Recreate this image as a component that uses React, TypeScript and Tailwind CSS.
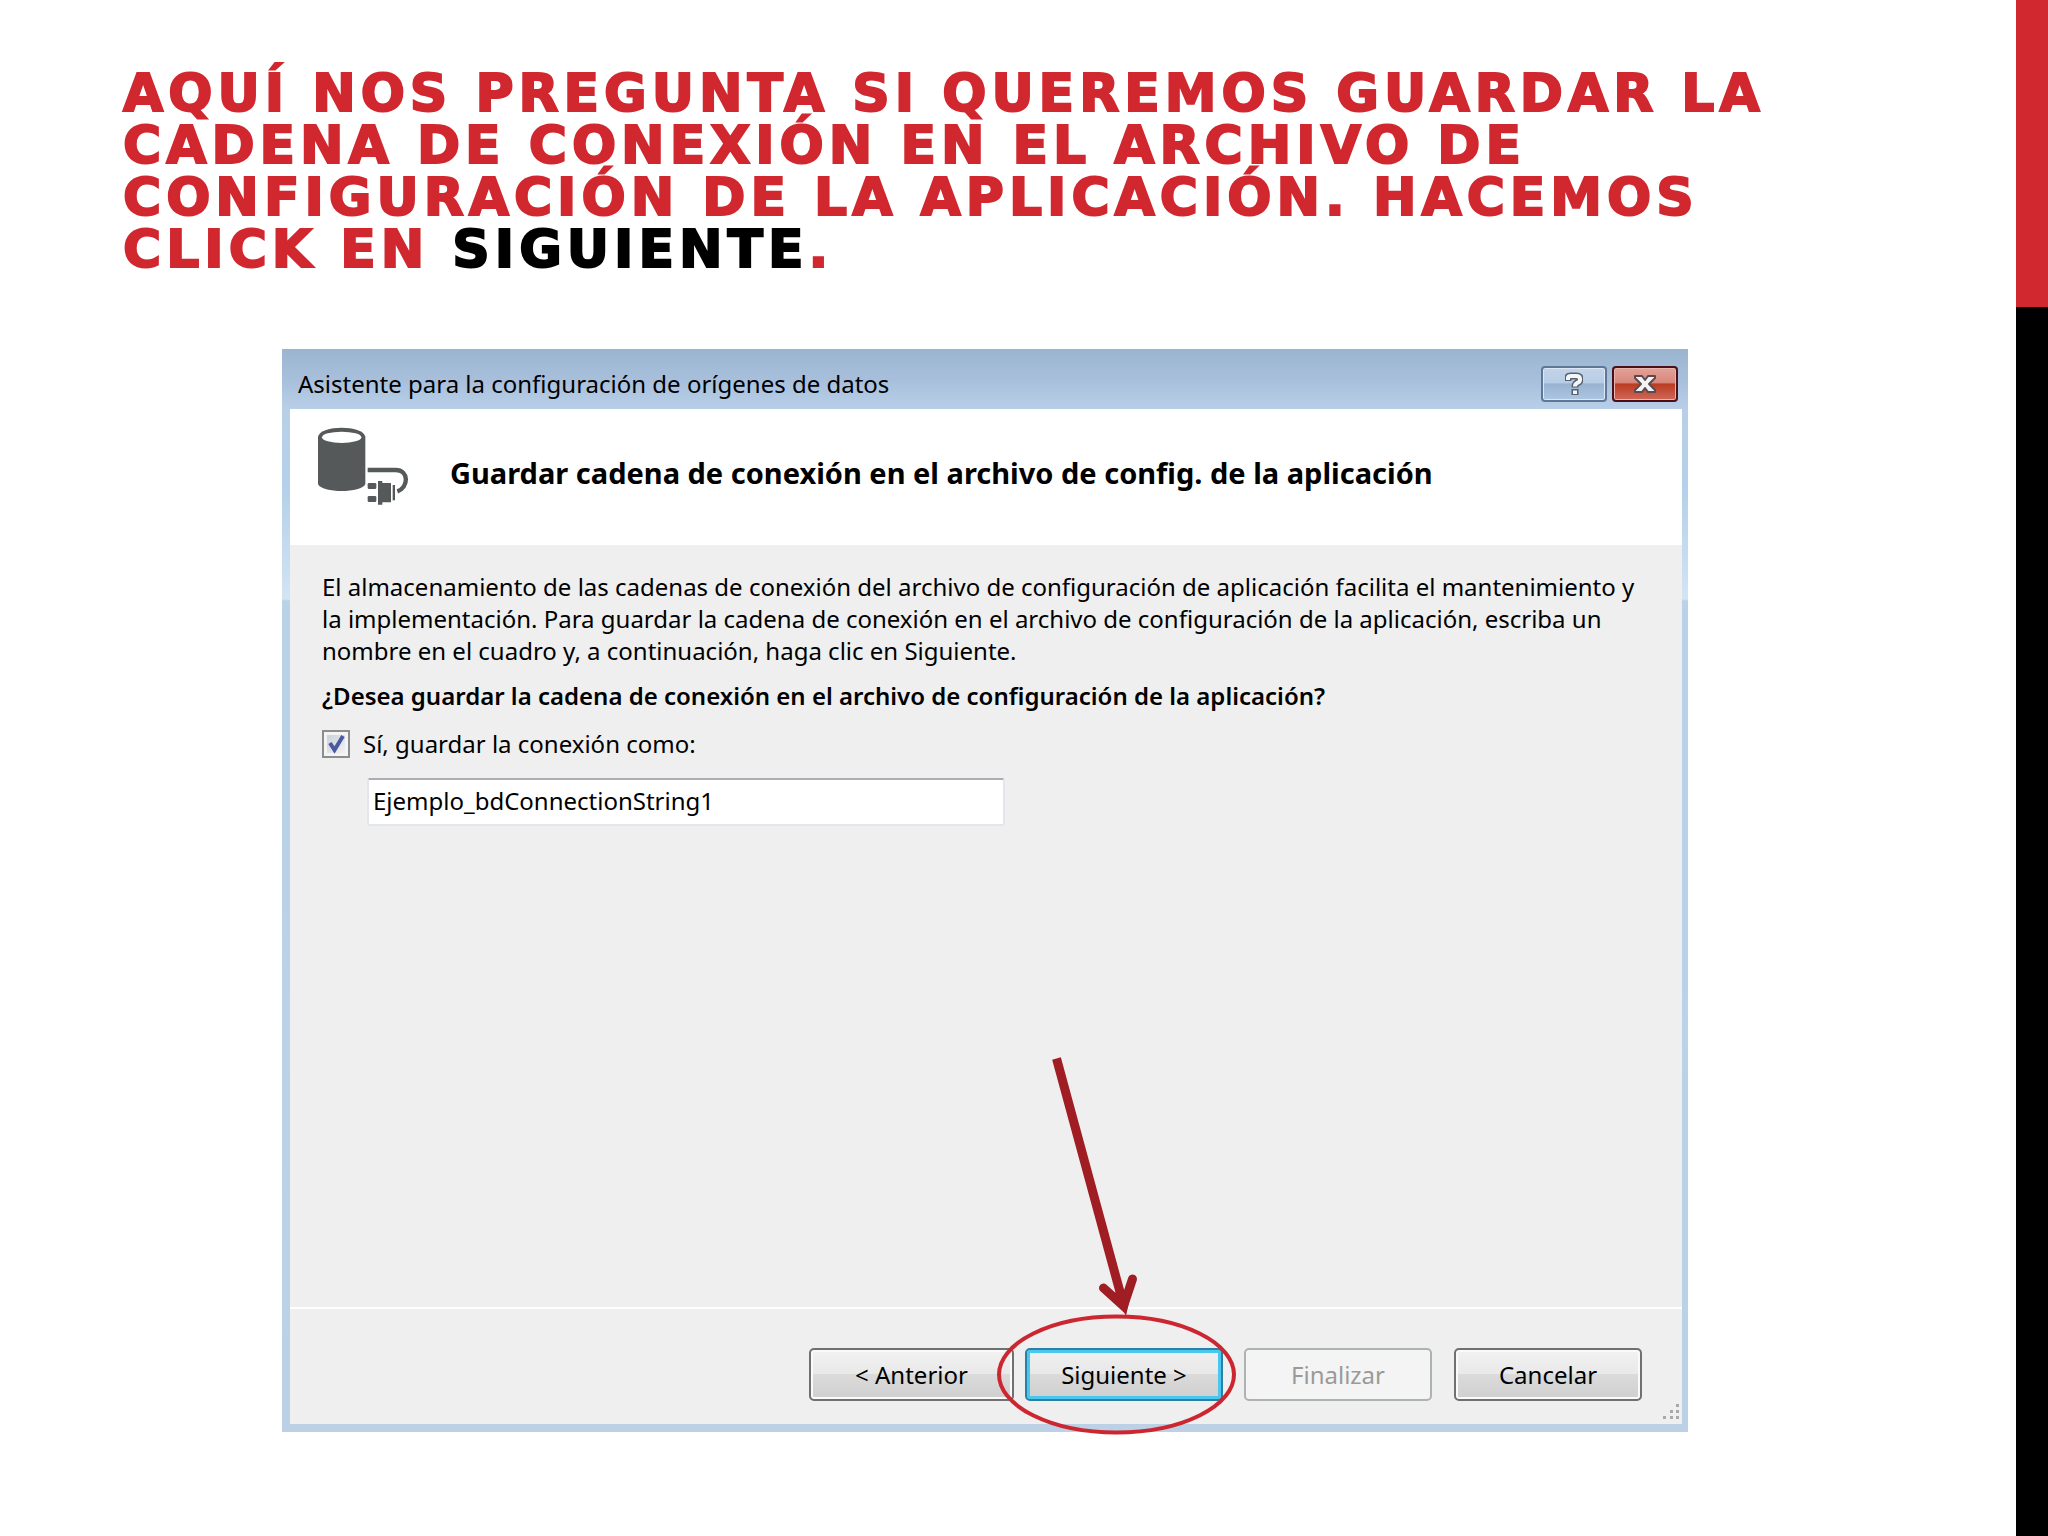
import { useState } from "react";
import type { ReactNode } from "react";
import clsx from "clsx";

function DatabasePlugIcon() {
  return (
    <svg
      viewBox="50 48 279 240"
      className="h-20 w-[93px] shrink-0"
      fill="#56595a"
      aria-hidden="true"
    >
      <path d="M53 80C60 44 188 44 195 80V222C185 250 63 250 53 222Z" />
      <ellipse cx="124" cy="82" rx="59" ry="17" fill="#fff" />
      <path
        d="M202 180H286C326 180 326 232 291 244"
        fill="none"
        stroke="#56595a"
        strokeWidth="13"
      />
      <rect x="202" y="219" width="26" height="18" rx="4" />
      <rect x="202" y="258" width="26" height="18" rx="4" />
      <path d="M233 213H246V219H272V277H246V284H233Z" />
      <rect x="277" y="225" width="7" height="46" />
    </svg>
  );
}

function CaptionButton({
  label,
  danger,
  children,
}: {
  label: string;
  danger?: boolean;
  children: ReactNode;
}) {
  return (
    <button
      type="button"
      aria-label={label}
      className={clsx(
        "flex h-9 w-[66px] items-center justify-center rounded-[4px] border-2",
        danger
          ? "border-[#4a0f18] bg-[linear-gradient(#e3a198_0%,#d9877c_46%,#bb3b22_50%,#d0685a_100%)] shadow-[inset_0_0_0_1px_#eab5ad]"
          : "border-[#5f7897] bg-[linear-gradient(#c3d4ea_0%,#b7cce5_46%,#98b2d1_50%,#adc6e2_100%)] shadow-[inset_0_0_0_1px_#dce8f5]"
      )}
    >
      {children}
    </button>
  );
}

function WizardButton({
  className,
  disabled,
  focused,
  children,
}: {
  className?: string;
  disabled?: boolean;
  focused?: boolean;
  children: ReactNode;
}) {
  return (
    <button
      type="button"
      disabled={disabled}
      className={clsx(
        "h-[53px] rounded-[5px] border-2 text-center text-[24px] leading-8",
        disabled && "border-[#adb2b5] bg-[#f4f4f4] text-[#9a9a9a]",
        focused &&
          "border-[#2c7fa5] bg-[linear-gradient(#f0f0f0_0%,#e8e8e8_48%,#dadada_50%,#cfcfcf_100%)] text-black shadow-[inset_0_0_0_3px_#48c8ee]",
        !disabled &&
          !focused &&
          "border-[#707070] bg-[linear-gradient(#f2f2f2_0%,#e9e9e9_48%,#dbdbdb_50%,#cfcfcf_100%)] text-black shadow-[inset_0_0_0_2px_#fafafa]",
        className
      )}
    >
      {children}
    </button>
  );
}

/* Circle and arrow drawn over the "next" button */
function Callout() {
  return (
    <svg
      viewBox="0 0 244 388"
      className="pointer-events-none absolute -top-[298px] -left-[30px] h-[388px] w-[244px]"
      fill="none"
      aria-hidden="true"
    >
      <ellipse cx="121.500" cy="324.500" rx="117.500" ry="58" stroke="#cc2630" strokeWidth="4" />
      <g stroke="#a01d24" strokeWidth="9">
        <path d="M61.500 8.500L128 253" />
        <path
          d="M108.500 238L128.500 256L137.500 229"
          strokeLinecap="round"
        />
      </g>
      <path d="M119 243L131 266L137 238Z" fill="#a01d24" />
    </svg>
  );
}

export default function App() {
  const [saveConnection, setSaveConnection] = useState(true);
  const [connectionName, setConnectionName] = useState(
    "Ejemplo_bdConnectionString1"
  );

  return (
    <div className="flex min-h-screen bg-white">
      <main className="min-w-0 flex-1 pb-[103px]">
        <h1 className="pt-[67px] pr-40 pl-[123px] font-['DejaVu_Sans',sans-serif] text-[52px] leading-[52px] font-black tracking-[5px] text-[#d1272f] uppercase [-webkit-text-stroke:2px_currentColor]">
          Aquí nos pregunta si queremos guardar la
          <br />
          cadena de conexión en el archivo de
          <br />
          configuración de la aplicación. Hacemos
          <br />
          click en <span className="text-black">Siguiente</span>.
        </h1>

        <section
          aria-label="Asistente"
          className="mt-[74px] mr-[328px] ml-[282px] bg-[linear-gradient(#9ab5d0_0px,#a7bfdb_30px,#b9cfe8_60px,#b4d0ea_140px,#d3e4f4_250px,#b9d2e8_252px,#bcd1e6_100%)] pr-[6px] pb-2 pl-2 font-['Noto_Sans','Open_Sans',sans-serif] text-black"
        >
          <header className="flex h-[60px] items-center justify-between pt-[10px] pr-1 pl-2">
            <h2 className="text-[24px] leading-8">
              Asistente para la configuración de orígenes de datos
            </h2>
            <div className="flex gap-[5px]">
              <CaptionButton label="Ayuda">
                <svg viewBox="0 0 18 24" className="h-6 w-[18px]" fill="none">
                  <path
                    d="M3 9V6Q3 4 6 4H11Q15 4 15 7V8Q15 10 12 11Q10 12 10 15.500M10 17V23"
                    stroke="#56606e"
                    strokeWidth="7"
                  />
                  <path
                    d="M3 8V6Q3 4 6 4H11Q15 4 15 7V8Q15 10 12 11Q10 12 10 14.500M10 18.500V22"
                    stroke="#f4f6f8"
                    strokeWidth="4"
                  />
                </svg>
              </CaptionButton>
              <CaptionButton label="Cerrar" danger>
                <svg viewBox="0 0 24 20" className="h-5 w-6">
                  <path
                    d="M2 2H9L12 6L15 2H22V4L16 10L22 16V18H15L12 14L9 18H2V16L8 10L2 4Z"
                    fill="#f2f2f2"
                    stroke="#5a4a50"
                    strokeWidth="2"
                    strokeLinejoin="round"
                  />
                </svg>
              </CaptionButton>
            </div>
          </header>

          <div className="flex h-[136px] items-start bg-white pt-[17px] pl-[27px]">
            <DatabasePlugIcon />
            <h3 className="mt-[31px] ml-[40px] text-[29px] leading-8 font-bold">
              Guardar cadena de conexión en el archivo de config. de la
              aplicación
            </h3>
          </div>

          <form
            className="bg-[#efefef]"
            onSubmit={(e) => e.preventDefault()}
          >
            <div className="h-[764px] border-b-2 border-white pt-[26px] pl-8">
              <p className="text-[24px] leading-8">
                El almacenamiento de las cadenas de conexión del archivo de
                configuración de aplicación facilita el mantenimiento y
                <br />
                la implementación. Para guardar la cadena de conexión en el
                archivo de configuración de la aplicación, escriba un
                <br />
                nombre en el cuadro y, a continuación, haga clic en Siguiente.
              </p>
              <p className="mt-[13px] text-[24px] leading-8 font-semibold">
                ¿Desea guardar la cadena de conexión en el archivo de
                configuración de la aplicación?
              </p>
              <div className="mt-4 flex items-center gap-[13px]">
                <span className="relative flex">
                  <input
                    id="save-connection"
                    type="checkbox"
                    checked={saveConnection}
                    onChange={(e) => setSaveConnection(e.target.checked)}
                    className="size-7 appearance-none border-2 border-[#8b8d8f] bg-[linear-gradient(135deg,#c5cdd6,#f5f6f8)] shadow-[inset_0_0_0_3px_#f4f4f4]"
                  />
                  {saveConnection && (
                    <svg
                      viewBox="0 0 28 28"
                      className="pointer-events-none absolute inset-0 size-7"
                      fill="none"
                    >
                      <path
                        d="M8 13L12.500 20L21 6"
                        stroke="#4b5aa0"
                        strokeWidth="4"
                      />
                    </svg>
                  )}
                </span>
                <label
                  htmlFor="save-connection"
                  className="text-[24px] leading-8"
                >
                  Sí, guardar la conexión como:
                </label>
              </div>
              <input
                type="text"
                aria-label="Nombre de la conexión"
                value={connectionName}
                onChange={(e) => setConnectionName(e.target.value)}
                className="mt-[18px] ml-[45px] block h-12 w-[638px] rounded-[3px] border-2 border-[#e3e6ea] border-t-[#abadb3] bg-white px-1 pb-1 text-[24px] leading-8 outline-none"
              />
            </div>

            <footer className="flex h-[115px] items-start justify-end pt-[39px] pr-10">
              <WizardButton className="mr-[11px] w-[205px]">
                &lt; Anterior
              </WizardButton>
              <span className="relative mr-[21px] flex">
                <WizardButton focused className="w-[198px]">
                  Siguiente &gt;
                </WizardButton>
                <Callout />
              </span>
              <WizardButton disabled className="mr-[22px] w-[188px]">
                Finalizar
              </WizardButton>
              <span className="relative flex">
                <WizardButton className="w-[188px]">Cancelar</WizardButton>
                <svg
                  viewBox="0 0 18 18"
                  className="absolute -right-[38px] -bottom-[20px] size-[18px]"
                  fill="#a9a9a9"
                >
                  <rect x="14" y="1" width="3" height="3" />
                  <rect x="8" y="7" width="3" height="3" />
                  <rect x="14" y="7" width="3" height="3" />
                  <rect x="1" y="13" width="3" height="3" />
                  <rect x="8" y="13" width="3" height="3" />
                  <rect x="14" y="13" width="3" height="3" />
                </svg>
              </span>
            </footer>
          </form>
        </section>
      </main>

      <aside className="flex w-8 shrink-0 flex-col bg-black">
        <div className="h-[20vh] bg-[#d1272f]" />
      </aside>
    </div>
  );
}
